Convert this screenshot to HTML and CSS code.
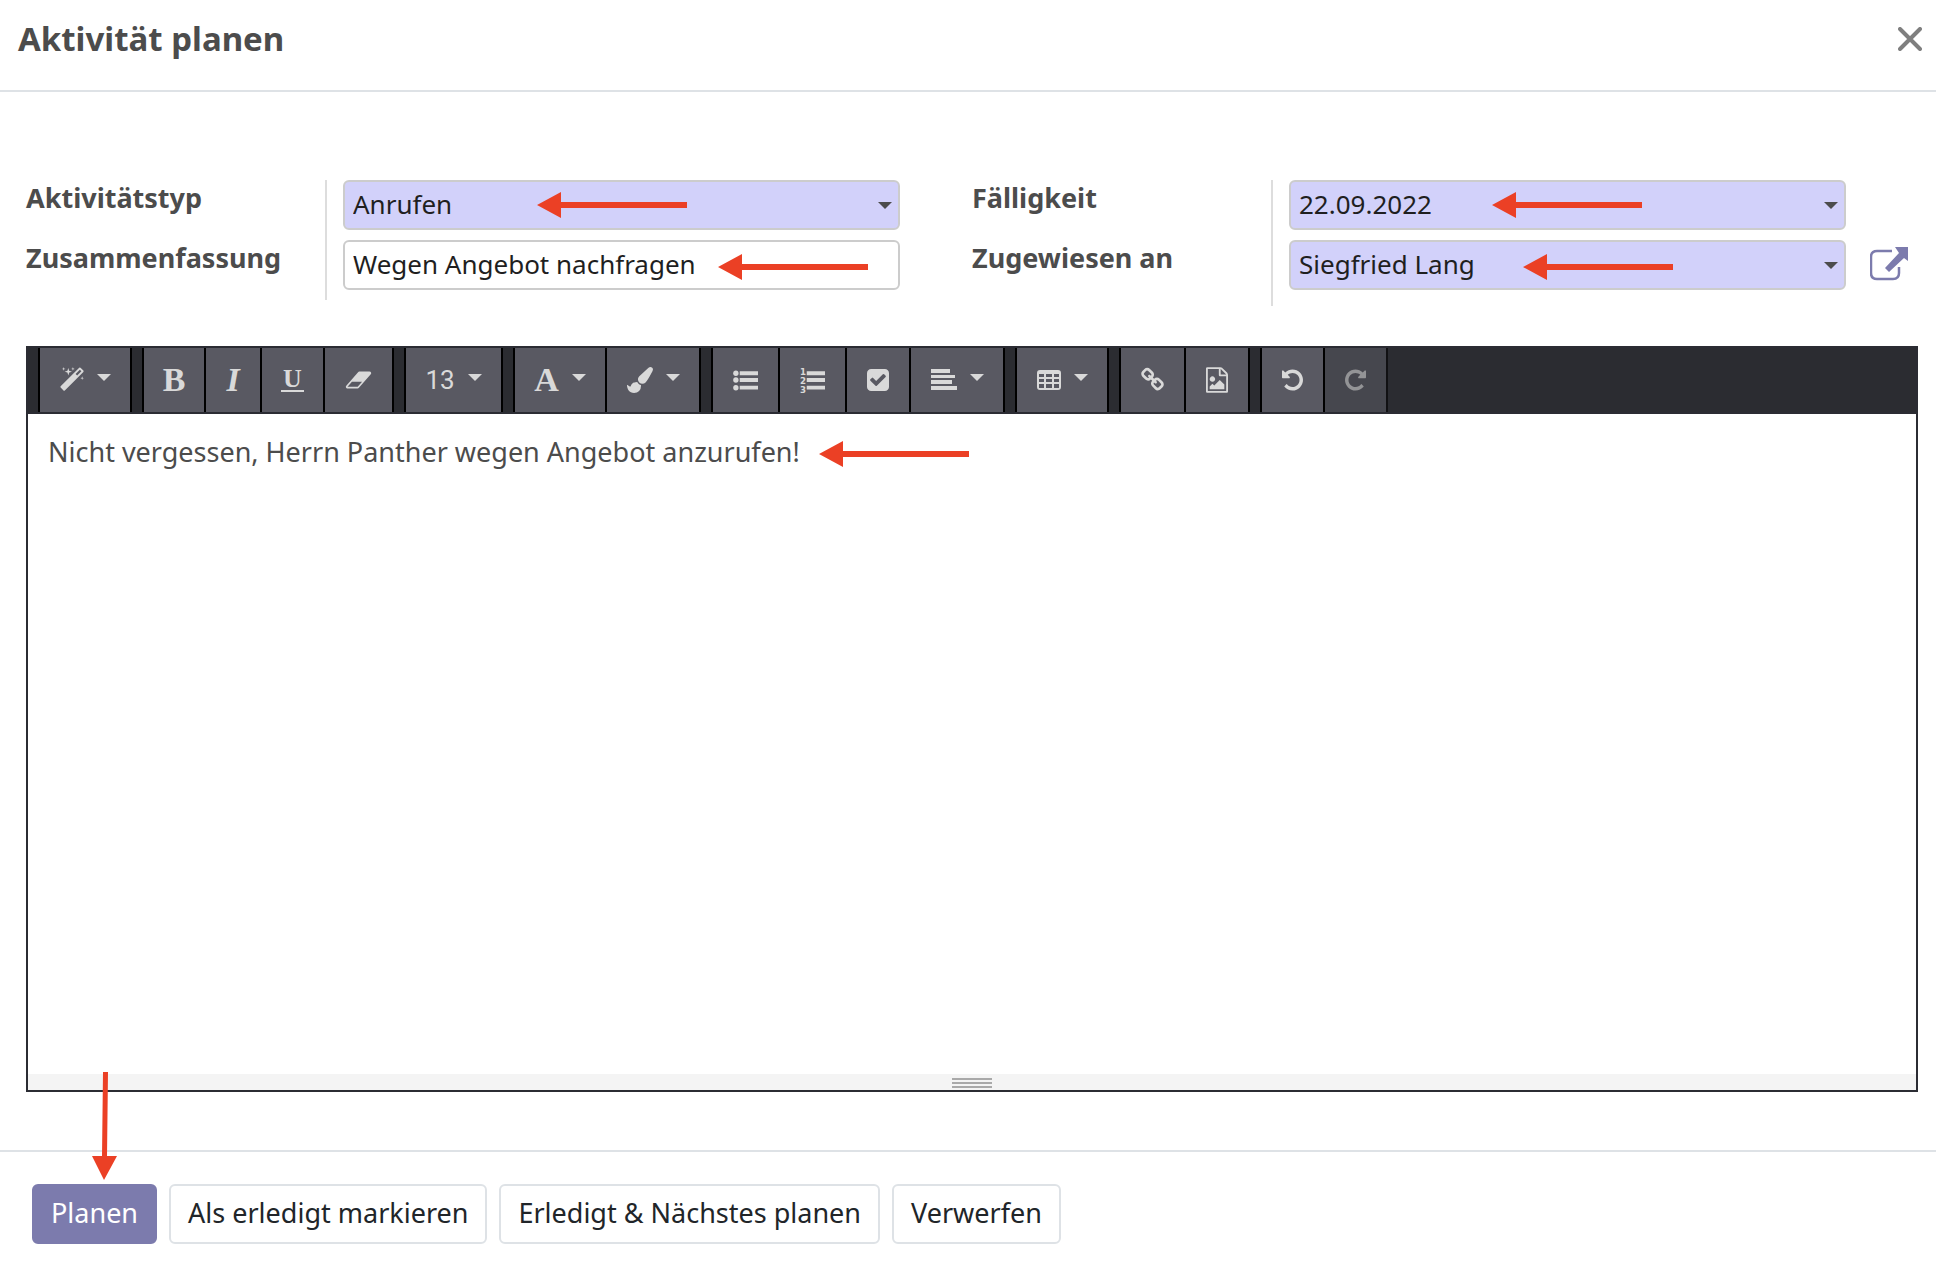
FILE: index.html
```html
<!DOCTYPE html>
<html lang="de">
<head>
<meta charset="utf-8">
<title>Aktivität planen</title>
<link rel="stylesheet" href="styles.css">
</head>
<body>
<main class="dialog">
  <header class="dialog-header">
    <h1>Aktivität planen</h1>
    <button class="close" type="button" aria-label="Schließen"><svg width="24" height="24" viewBox="0 0 24 24"><path d="M2 2L22 22M22 2L2 22" fill="none" stroke="currentColor" stroke-width="4" stroke-linecap="round"/></svg></button>
  </header>

  <form class="dialog-body">
    <div class="form-grid">
      <section class="group">
        <div class="labels">
          <label for="type">Aktivitätstyp</label>
          <label for="summary">Zusammenfassung</label>
        </div>
        <div class="fields">
          <div class="field dropdown">
            <select id="type" class="control required"><option>Anrufen</option></select>
            <svg class="arrow arrow-type" width="150" height="26" viewBox="0 0 150 26"><path d="M0 13L24 0V10H150V16H24V26Z"/></svg>
          </div>
          <div class="field">
            <input id="summary" class="control" type="text" value="Wegen Angebot nachfragen">
            <svg class="arrow arrow-summary" width="150" height="26" viewBox="0 0 150 26"><path d="M0 13L24 0V10H150V16H24V26Z"/></svg>
          </div>
        </div>
      </section>
      <section class="group group-last">
        <div class="labels">
          <label for="due">Fälligkeit</label>
          <label for="user">Zugewiesen an</label>
        </div>
        <div class="fields">
          <div class="field dropdown">
            <input id="due" class="control required" type="text" value="22.09.2022">
            <svg class="arrow arrow-due" width="150" height="26" viewBox="0 0 150 26"><path d="M0 13L24 0V10H150V16H24V26Z"/></svg>
          </div>
          <div class="field dropdown">
            <select id="user" class="control required"><option>Siegfried Lang</option></select>
            <svg class="arrow arrow-user" width="150" height="26" viewBox="0 0 150 26"><path d="M0 13L24 0V10H150V16H24V26Z"/></svg>
            <button class="external" type="button" aria-label="Externer Link"><svg width="38" height="34" viewBox="0 0 38 34"><path d="M22 4H7Q1 4 1 10V26Q1 32 7 32H23Q29 32 29 26V20" fill="none" stroke="currentColor" stroke-width="2.500"/><path d="M25 0H38V14L34 11L19 25L15 21L29 6Z" fill="currentColor"/></svg></button>
          </div>
        </div>
      </section>
    </div>

    <div class="editor">
      <div class="toolbar">
        <div class="tools">
          <button class="tool tool-menu" type="button" aria-label="Stil"><svg width="24" height="26" viewBox="0 0 1664 1792"><path d="M1190 581l293-293-107-107-293 293zm447-293q0 27-18 45l-1286 1286q-18 18-45 18t-45-18l-198-198q-18-18-18-45t18-45l1286-1286q18-18 45-18t45 18l198 198q18 18 18 45zm-1351-190l98 30-98 30-30 98-30-98-98-30 98-30 30-98zm350 162l196 60-196 60-60 196-60-196-196-60 196-60 60-196zm930 478l98 30-98 30-30 98-30-98-98-30 98-30 30-98zm-640-640l98 30-98 30-30 98-30-98-98-30 98-30 30-98z"/></svg></button>
        </div>
        <div class="tools">
          <button class="tool glyph" type="button">B</button>
          <button class="tool glyph italic" type="button">I</button>
          <button class="tool glyph underline" type="button"><span>U</span></button>
          <button class="tool" type="button" aria-label="Formatierung entfernen"><svg width="27" height="26" viewBox="0 0 2048 1792"><path d="M960 1408l336-384h-768l-336 384h768zm1013-1077q15 34 9.500 71.500t-30.500 65.500l-896 1024q-38 44-96 44h-768q-38 0-69.500-20.500t-47.500-54.500q-15-34-9.500-71.500t30.500-65.500l896-1024q38-44 96-44h768q38 0 69.500 20.500t47.500 54.500z"/></svg></button>
        </div>
        <div class="tools">
          <button class="tool tool-menu size" type="button">13</button>
        </div>
        <div class="tools">
          <button class="tool tool-menu glyph letter" type="button">A</button>
          <button class="tool tool-menu" type="button" aria-label="Hintergrundfarbe"><svg width="26" height="26" viewBox="0 0 1792 1792"><path d="M1615 0q70 0 122.500 46.500t52.500 116.500q0 63-45 151-332 629-465 752-97 91-218 91-126 0-216.500-92.500t-90.500-219.500q0-128 92-212l638-579q59-54 130-54zm-909 1034q39 76 106.500 130t150.500 76l1 71q4 213-129.500 347t-348.500 134q-123 0-218-46.500t-152.500-127.500-86.500-183-29-220q7 5 41 30t62 44.500 59 36.500 46 17q41 0 55-37 25-66 57.500-112.500t69.500-76 88-47.500 103-25.500 125-10.500z"/></svg></button>
        </div>
        <div class="tools">
          <button class="tool" type="button" aria-label="Liste"><svg width="25" height="26" viewBox="0 0 26 26"><circle cx="3" cy="6" r="2.800"/><circle cx="3" cy="13" r="2.800"/><circle cx="3" cy="21" r="2.800"/><path d="M7 4H26V8H7ZM7 11H26V15H7ZM7 19H26V23H7Z"/></svg></button>
          <button class="tool" type="button" aria-label="Nummerierte Liste"><svg class="numbers" width="25" height="26" viewBox="0 0 26 26"><text x="0" y="8">1</text><text x="0" y="17">2</text><text x="0" y="26">3</text><path d="M7 4H26V8H7ZM7 11H26V15H7ZM7 19H26V23H7Z"/></svg></button>
          <button class="tool" type="button" aria-label="Checkliste"><svg width="22" height="26" viewBox="128 0 1536 1792"><path d="M813 1299l614-614q19-19 19-45t-19-45l-102-102q-19-19-45-19t-45 19l-467 467-211-211q-19-19-45-19t-45 19l-102 102q-19 19-19 45t19 45l358 358q19 19 45 19t45-19zm851-883v960q0 119-84.500 203.500t-203.500 84.500h-960q-119 0-203.500-84.500t-84.500-203.500v-960q0-119 84.500-203.500t203.500-84.500h960q119 0 203.500 84.500t84.500 203.500z"/></svg></button>
          <button class="tool tool-menu" type="button" aria-label="Absatz"><svg width="26" height="26" viewBox="0 0 26 26"><path d="M0 2H19V6H0ZM0 8H24V11H0ZM0 13H21V17H0ZM0 19H26V23H0Z"/></svg></button>
        </div>
        <div class="tools">
          <button class="tool tool-menu" type="button" aria-label="Tabelle"><svg width="24" height="26" viewBox="0 0 24 26"><path fill-rule="evenodd" d="M3 3H21Q24 3 24 6V20Q24 23 21 23H3Q0 23 0 20V6Q0 3 3 3ZM2 7V10H7V7ZM9 7V10H15V7ZM17 7V10H22V7ZM2 12V15H7V12ZM9 12V15H15V12ZM17 12V15H22V12ZM2 17V21H7V17ZM9 17V21H15V17ZM17 17V21H22V17Z"/></svg></button>
        </div>
        <div class="tools">
          <button class="tool" type="button" aria-label="Link"><svg width="23" height="26" viewBox="64 0 1664 1792"><path d="M1520 1216q0-40-28-68l-208-208q-28-28-68-28-42 0-72 32 3 3 19 18.500t21.500 21.500 15 19 13 25.500 3.500 27.500q0 40-28 68t-68 28q-15 0-27.500-3.500t-25.500-13-19-15-21.500-21.500-18.500-19q-33 31-33 73 0 40 28 68l206 207q27 27 68 27 40 0 68-26l147-146q28-28 28-67zm-703-705q0-40-28-68l-206-207q-28-28-68-28-39 0-68 27l-147 146q-28 28-28 67 0 40 28 68l208 208q27 27 68 27 42 0 72-31-3-3-19-18.500t-21.500-21.500-15-19-13-25.500-3.500-27.500q0-40 28-68t68-28q15 0 27.500 3.500t25.500 13 19 15 21.500 21.500 18.500 19q33-31 33-73zm895 705q0 120-85 203l-147 146q-83 83-203 83-121 0-204-85l-206-207q-83-83-83-203 0-123 88-209l-88-88q-86 88-208 88-120 0-204-84l-208-208q-84-84-84-204t85-203l147-146q83-83 203-83 121 0 204 85l206 207q83 83 83 203 0 123-88 209l88 88q86-88 208-88 120 0 204 84l208 208q84 84 84 204z"/></svg></button>
          <button class="tool" type="button" aria-label="Bild"><svg width="22" height="26" viewBox="128 0 1536 1792"><path d="M1596 380q28 28 48 76t20 88v1152q0 40-28 68t-68 28h-1344q-40 0-68-28t-28-68v-1600q0-40 28-68t68-28h896q40 0 88 20t76 48zm-444-244v376h376q-10-29-22-41l-313-313q-12-12-41-22zm384 1528v-1024h-416q-40 0-68-28t-28-68v-416h-768v1536h1280zm-128-448v320h-1024v-192l192-192 128 128 384-384zm-832-192q-80 0-136-56t-56-136 56-136 136-56 136 56 56 136-56 136-136 56z"/></svg></button>
        </div>
        <div class="tools">
          <button class="tool" type="button" aria-label="Rückgängig"><svg width="21" height="26" viewBox="128 0 1536 1792"><path id="undo" d="M1664 896q0 156-61 298t-164 245-245 164-298 61q-172 0-327-72.500t-264-204.500q-7-10-6.500-22.500t8.500-20.500l137-138q10-9 25-9 16 2 23 12 73 95 179 147t225 52q104 0 198.500-40.500t163.500-109.500 109.500-163.500 40.500-198.500-40.500-198.500-109.500-163.500-163.500-109.500-198.500-40.500q-98 0-188 35.500t-160 101.500l137 138q31 30 14 69-17 40-59 40h-448q-26 0-45-19t-19-45v-448q0-42 40-59 39-17 69 14l130 129q107-101 244.500-156.500t284.500-55.500q156 0 298 61t245 164 164 245 61 298z"/></svg></button>
          <button class="tool" type="button" aria-label="Wiederholen" disabled><svg width="21" height="26" viewBox="128 0 1536 1792"><use href="#undo" transform="translate(1792 0) scale(-1 1)"/></svg></button>
        </div>
      </div>
      <div class="note">
        <textarea aria-label="Notiz">Nicht vergessen, Herrn Panther wegen Angebot anzurufen!</textarea>
        <svg class="arrow arrow-note" width="150" height="26" viewBox="0 0 150 26"><path d="M0 13L24 0V10H150V16H24V26Z"/></svg>
      </div>
      <div class="resize"><span></span><span></span><span></span></div>
    </div>
  </form>

  <footer class="dialog-footer">
    <button class="btn primary" type="button">Planen</button>
    <button class="btn" type="button">Als erledigt markieren</button>
    <button class="btn" type="button">Erledigt &amp; Nächstes planen</button>
    <button class="btn" type="button">Verwerfen</button>
    <svg class="arrow arrow-plan" width="26" height="108" viewBox="0 0 26 108"><path d="M11 0H16L15 84H25L12 108L0 84H10Z"/></svg>
  </footer>
</main>
</body>
</html>
```
FILE: styles.css
```css
* { box-sizing: border-box; }

body {
  margin: 0;
  background: #fff;
  color: #4c4c4c;
  font: 27px/36px "Noto Sans", "Open Sans", sans-serif;
}

button, input, select, textarea { font: inherit; color: inherit; }
button { cursor: pointer; }
svg { display: block; fill: currentColor; }

.dialog {
  display: flex;
  flex-direction: column;
  min-height: 100vh;
}

.dialog-header {
  display: flex;
  justify-content: space-between;
  align-items: center;
  height: 92px;
  padding: 0 14px 12px 18px;
  border-bottom: 2px solid #dee2e6;
}

h1 { margin: 0; font-size: 33px; font-weight: 700; }

.close, .external {
  padding: 0;
  border: 0;
  background: none;
}
.close { color: #7f7f7f; }

.dialog-body {
  display: flex;
  flex: 1;
  flex-direction: column;
  padding: 88px 18px 58px 26px;
}

.form-grid {
  display: grid;
  grid-template-columns: 1fr 1fr;
  height: 166px;
  align-items: start;
}

.group { display: flex; }

.labels {
  display: flex;
  flex: 0 0 299px;
  flex-direction: column;
  gap: 24px;
  font-weight: 700;
}

.fields {
  display: flex;
  flex: 1;
  flex-direction: column;
  gap: 10px;
  padding: 0 72px 10px 16px;
  border-left: 2px solid #ddd;
}
.group-last .fields { padding-bottom: 16px; }

.field { position: relative; }

.control {
  display: block;
  width: 100%;
  height: 50px;
  padding: 0 8px 2px;
  border: 2px solid #ccc;
  border-radius: 6px;
  background: #fff;
  color: #1f1f1f;
  font-size: 26px;
  appearance: none;
}
.required { background: #d2d1fa; }

.dropdown::after {
  content: "";
  position: absolute;
  top: 22px;
  right: 8px;
  border: 7px solid transparent;
  border-top-color: #4c4c4c;
  border-bottom: 0;
}

.external {
  position: absolute;
  top: 7px;
  left: calc(100% + 24px);
  color: #7c7bad;
}

.arrow {
  position: absolute;
  color: #eb4025;
  pointer-events: none;
}
.arrow-type { top: 12px; left: 194px; }
.arrow-summary { top: 14px; left: 375px; }
.arrow-due { top: 12px; left: 203px; }
.arrow-user { top: 14px; left: 234px; }
.arrow-note { top: 27px; left: 791px; }
.arrow-plan { top: -80px; left: 92px; }

.editor {
  display: flex;
  flex: 1;
  flex-direction: column;
  border: 2px solid #2b2c33;
}

.toolbar {
  display: flex;
  gap: 10px;
  height: 66px;
  padding-left: 10px;
  border-bottom: 2px solid #2b2c33;
  background: #2b2c31;
}

.tools {
  display: flex;
  border-left: 2px solid #000;
}

.tool {
  display: flex;
  align-items: center;
  padding: 0 20px;
  border: 0;
  border-right: 2px solid #000;
  background: #595962;
  color: #d9d9d9;
}
.tool:disabled { opacity: .6; }

.tool-menu { padding-right: 19px; }
.tool-menu::after {
  content: "";
  margin: 0 0 5px 13px;
  border: 7px solid transparent;
  border-top-color: currentColor;
  border-bottom: 0;
}

.glyph {
  justify-content: center;
  width: 62px;
  padding: 0 18px;
  font: 700 34px/40px "Liberation Serif", serif;
}
.italic { width: 56px; font-style: italic; }
.underline { width: 63px; font-size: 26px; }
.underline span {
  height: 24px;
  padding: 0 2px;
  border-bottom: 2px solid currentColor;
  line-height: 22px;
}
.letter { width: 92px; }
.size {
  justify-content: center;
  width: 97px;
  padding: 0 18px;
  font-family: Roboto, sans-serif;
  font-size: 26px;
}

.numbers { overflow: visible; font: 700 9px "DejaVu Sans", sans-serif; }

.note {
  position: relative;
  display: flex;
  flex: 1;
}
.note textarea {
  flex: 1;
  padding: 20px;
  border: 0;
  resize: none;
  outline: 0;
}

.resize {
  display: flex;
  flex-direction: column;
  align-items: center;
  gap: 2px;
  height: 16px;
  padding-top: 4px;
  background: #f4f4f4;
}
.resize span { width: 40px; height: 2px; background: #a9a9a9; }

.dialog-footer {
  position: relative;
  display: flex;
  gap: 12px;
  padding: 32px 32px 26px;
  border-top: 2px solid #dee2e6;
}

.btn {
  height: 60px;
  padding: 0 17px 2px;
  border: 2px solid #dee2e6;
  border-radius: 6px;
  background: #fff;
  color: #212529;
}
.primary {
  border-color: #7c7bad;
  background: #7c7bad;
  color: #fff;
}
```
